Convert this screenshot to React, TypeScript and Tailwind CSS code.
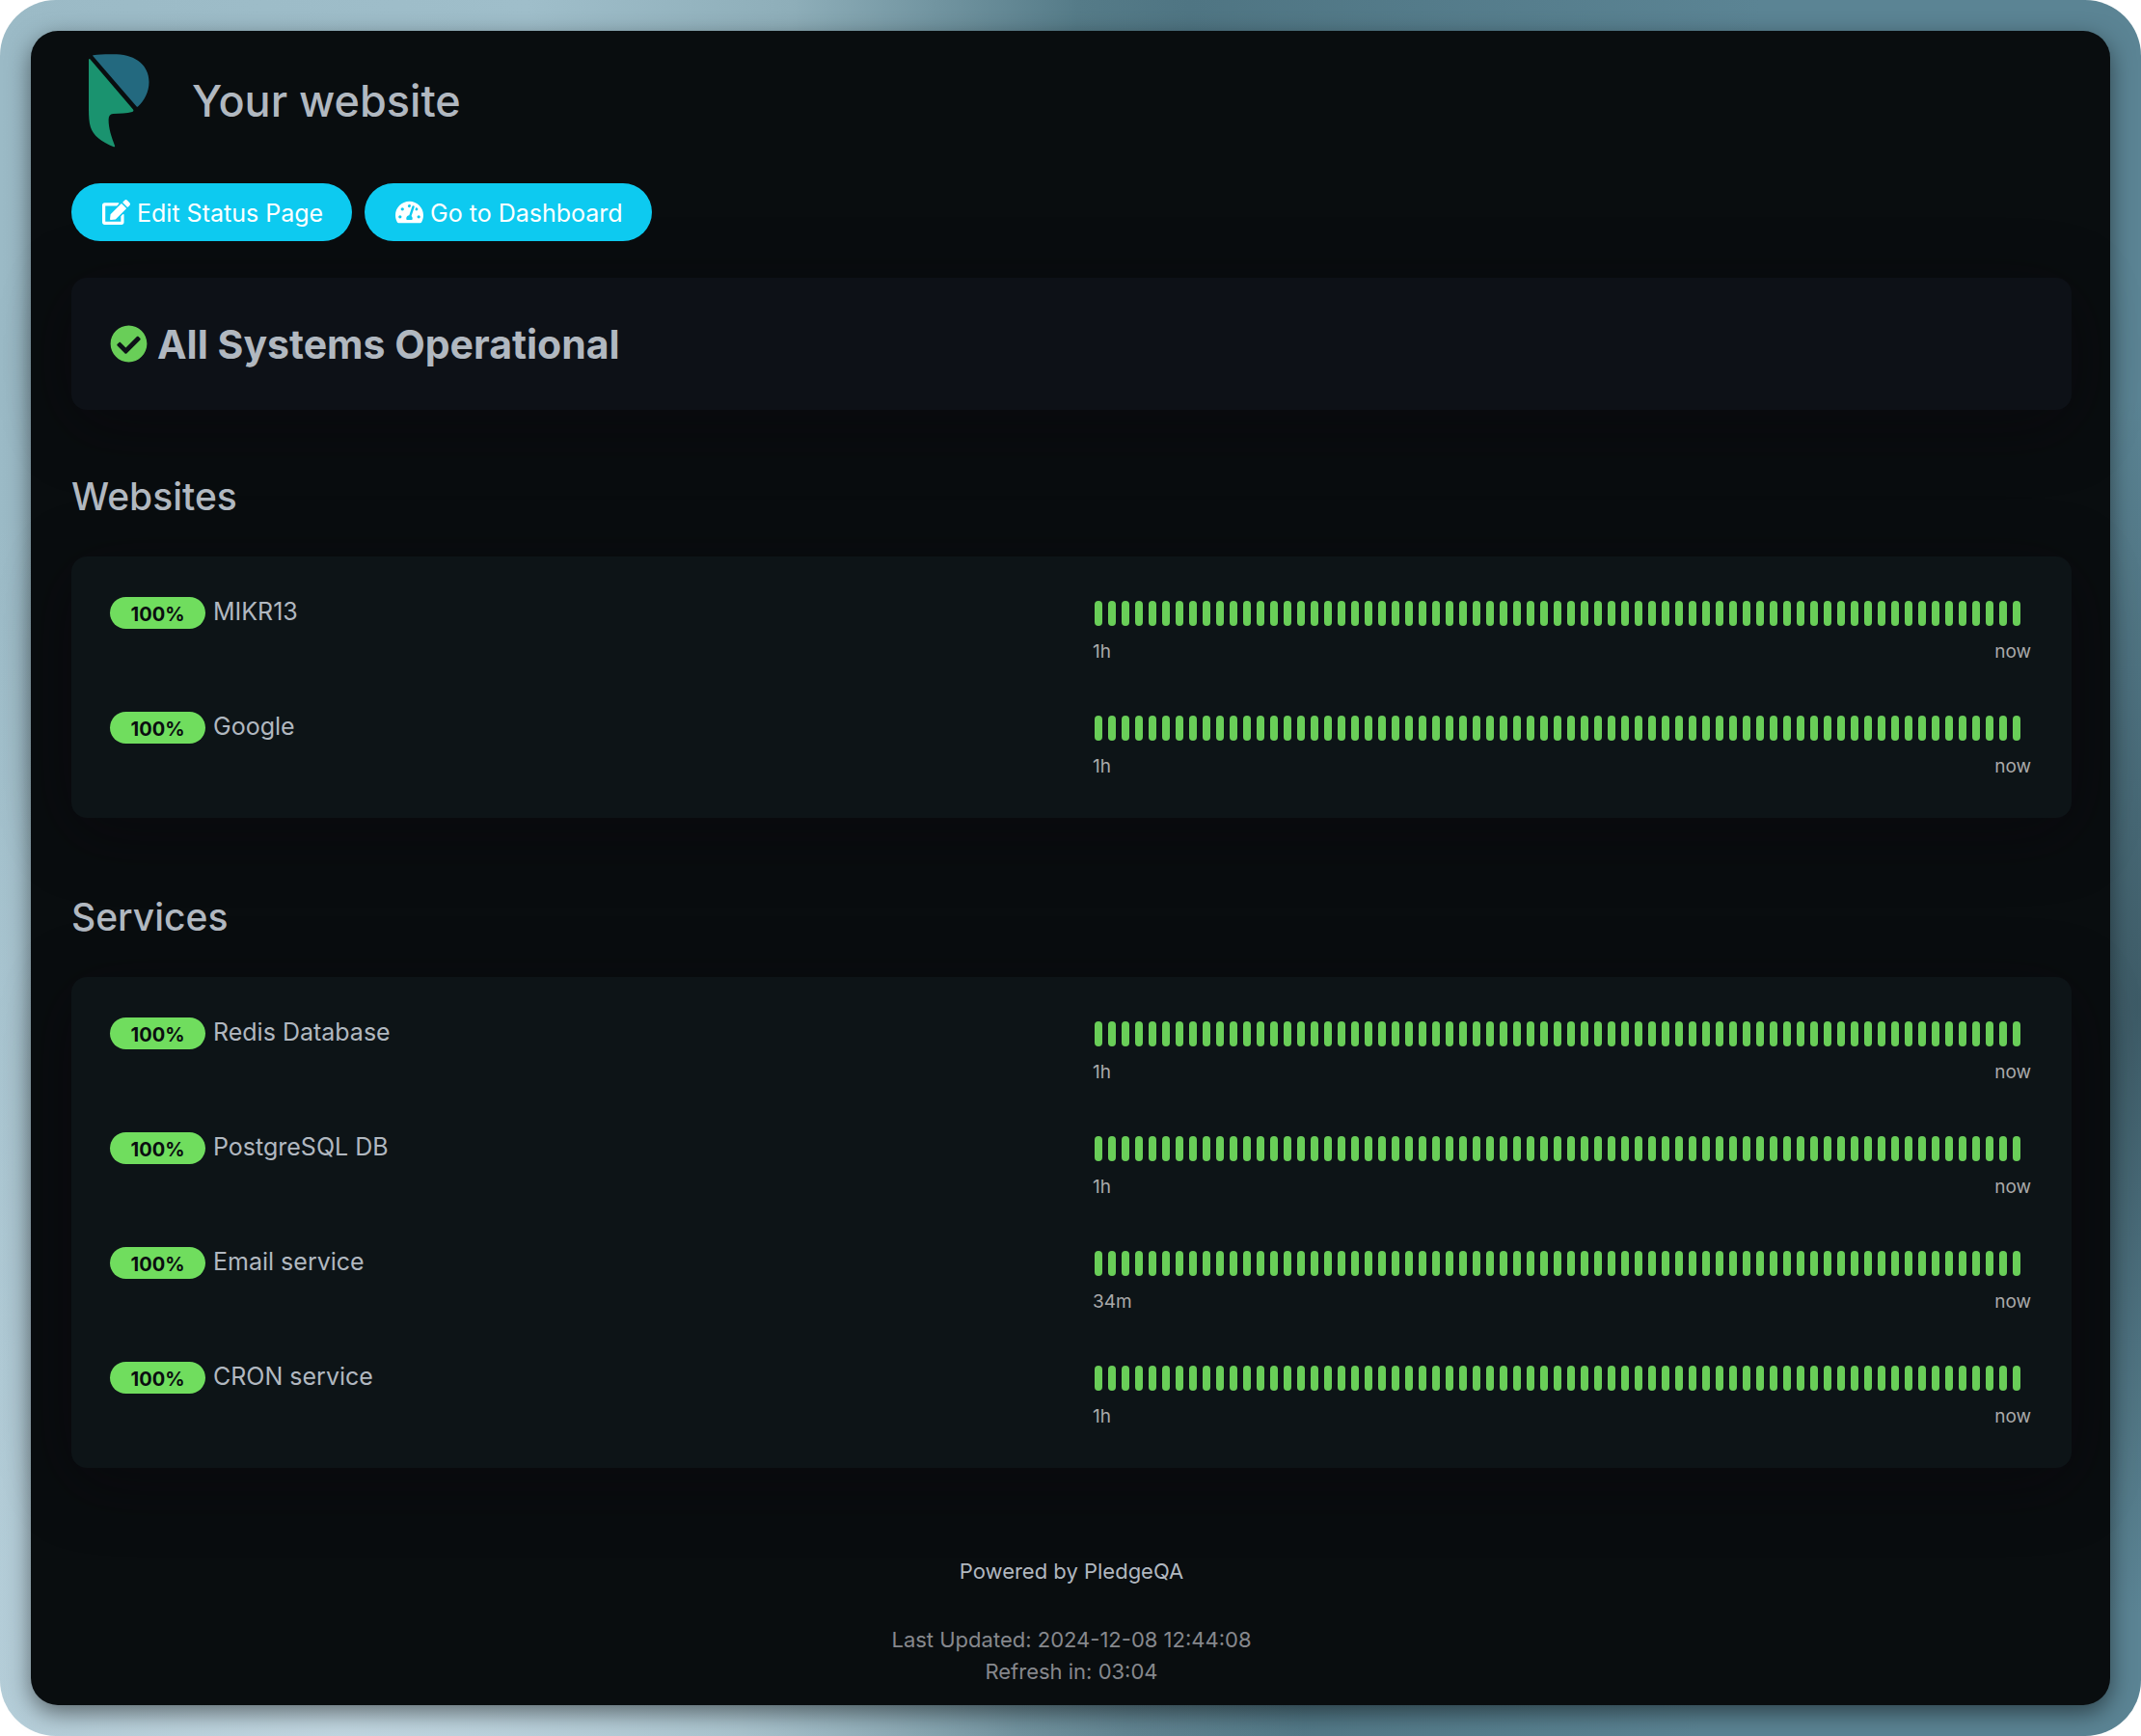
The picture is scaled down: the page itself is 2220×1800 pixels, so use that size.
import React from "react";
import { FaEdit, FaTachometerAlt, FaCheckCircle } from "react-icons/fa";

type Monitor = { name: string; uptime: string; since: string };
type Group = { title: string; monitors: Monitor[] };

const groups: Group[] = [
  {
    title: "Websites",
    monitors: [
      { name: "MIKR13", uptime: "100%", since: "1h" },
      { name: "Google", uptime: "100%", since: "1h" },
    ],
  },
  {
    title: "Services",
    monitors: [
      { name: "Redis Database", uptime: "100%", since: "1h" },
      { name: "PostgreSQL DB", uptime: "100%", since: "1h" },
      { name: "Email service", uptime: "100%", since: "34m" },
      { name: "CRON service", uptime: "100%", since: "1h" },
    ],
  },
];

const BEATS = Array.from({ length: 69 }, (_, i) => i);

function Logo() {
  return (
    <svg viewBox="0 0 63 97" className="h-[97px] w-[63px] shrink-0" role="img" aria-label="PledgeQA logo">
      <path
        fill="#23697f"
        d="M4.5 1.2C12 .1 21 0 29 .3 49 1 62.5 12 62.5 29c0 10-4.500 19-11.500 25.500-.4.3-1 .3-1.300-.1L4.300 2.100c-.3-.4-.2-.8.2-.9Z"
      />
      <path
        fill="#1a936f"
        d="M0 6c0-1 .9-1.300 1.500-.6L46 57.500c.8 1 .4 2.200-.8 2.500-5.700 1.500-13 1.600-20 2.100-3.200.3-4.500 2.400-4.600 6-.2 8.500 3 18.400 6.400 26.800.4 1-.2 1.700-1.200 1.300C13 91 4.500 84.500 1.800 75.500.4 71 0 64 0 57V6Z"
      />
    </svg>
  );
}

function MonitorRow({ monitor }: { monitor: Monitor }) {
  return (
    <li className="grid h-[119px] grid-cols-2 px-10 pt-6">
      <div className="flex items-start gap-2">
        <span className="mt-0.5 flex h-[33px] w-[99px] items-center justify-center rounded-full bg-[#70dd5e] pt-0.5 text-[20px] leading-8 font-bold text-[#0a0d10]">
          {monitor.uptime}
        </span>
        <span className="text-[25px] leading-[34px]">{monitor.name}</span>
      </div>
      <div className="pl-6">
        <div className="flex h-[38px] items-center gap-1.5" role="img" aria-label={`${monitor.name} heartbeat`}>
          {BEATS.map((beat) => (
            <span key={beat} className="h-[26px] w-2 shrink-0 rounded-full bg-[#69ce58]" />
          ))}
        </div>
        <div className="flex justify-between pr-0.5 text-[19px] leading-[42px] text-[#aaaaaa]">
          <span className="-ml-0.5">{monitor.since}</span>
          <span>now</span>
        </div>
      </div>
    </li>
  );
}

export default function App() {
  return (
    <div className="bg-white font-['Inter','Liberation_Sans',sans-serif] text-[#b1b8c0]">
      <div className="rounded-[58px] bg-[radial-gradient(ellipse_12%_35%_at_100%_58%,rgba(52,78,88,0.75),transparent),radial-gradient(ellipse_45%_75%_at_16%_100%,rgba(200,220,230,0.85),transparent),linear-gradient(92deg,#9bbac6_0%,#9fbeca_24%,#8eaeb9_36%,#557b88_49%,#4f7583_54%,#5b8494_80%,#5b8494_100%)] p-8">
        <main className="rounded-[28px] bg-[#090d0f] pr-10 pb-[18px] pl-[42px] shadow-[0_8px_24px_rgba(0,0,0,0.5)]">
          <header className="flex items-center gap-11 pt-6 pl-[18px]">
            <Logo />
            <h1 className="text-[45px] leading-[58px] font-medium">Your website</h1>
          </header>

          <div className="mt-[37px] flex gap-[13px]">
            <button className="flex h-[60px] items-center gap-[7px] rounded-full bg-[#0dcaf0] pr-[30px] pl-8 text-[25px] leading-9 text-white">
              <FaEdit className="h-[26px] w-[29px]" />
              <span className="pt-0.5">Edit Status Page</span>
            </button>
            <button className="flex h-[60px] items-center gap-[7px] rounded-full bg-[#0dcaf0] pr-[30px] pl-8 text-[25px] leading-9 text-white">
              <FaTachometerAlt className="h-[26px] w-[29px]" />
              <span className="pt-0.5">Go to Dashboard</span>
            </button>
          </div>

          <section className="mt-[38px] flex h-[137px] items-center gap-2.5 rounded-2xl bg-[#0d1117] px-10 shadow-[0_15px_70px_rgba(12,4,12,0.45)]">
            <FaCheckCircle className="size-[39px] text-[#69ce58]" />
            <span className="text-[41px] leading-[48px] font-bold">All Systems Operational</span>
          </section>

          <div className="mt-[66px] flex flex-col gap-[79px]">
            {groups.map((group) => (
              <section key={group.title}>
                <h2 className="text-[39px] leading-[48px] font-medium">{group.title}</h2>
                <ul className="mt-[38px] rounded-2xl bg-[#0d1417] pt-4 pb-[17px] shadow-[0_15px_70px_rgba(12,4,12,0.45)]">
                  {group.monitors.map((monitor) => (
                    <MonitorRow key={monitor.name} monitor={monitor} />
                  ))}
                </ul>
              </section>
            ))}
          </div>

          <footer className="mt-[91px] text-center text-[22px] leading-[33px]">
            <p>Powered by PledgeQA</p>
            <div className="mt-[38px] text-[#86888d]">
              <p>Last Updated: 2024-12-08 12:44:08</p>
              <p>Refresh in: 03:04</p>
            </div>
          </footer>
        </main>
      </div>
    </div>
  );
}
